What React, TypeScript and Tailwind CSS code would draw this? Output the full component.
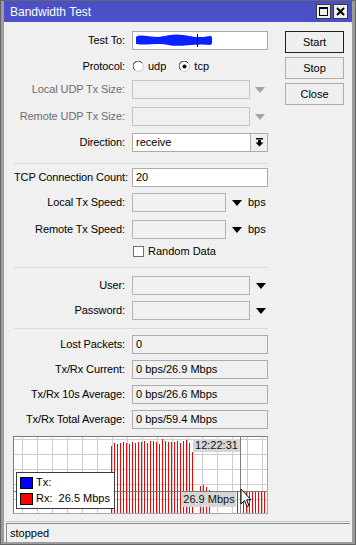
import React from "react";

const font = { fontFamily: '"Liberation Sans", Arial, sans-serif' };

function Arrow({ color = "#000" }: { color?: string }) {
  return (
    <svg width="10" height="6" viewBox="0 0 10 6">
      <polygon points="0,0 10,0 5,6" fill={color} />
    </svg>
  );
}

function Radio({ checked }: { checked?: boolean }) {
  return (
    <svg width="11" height="11" viewBox="0 0 11 11">
      <circle cx="5.5" cy="5.5" r="5" fill="#fff" stroke="#c8c8c8" />
      <path d="M 9 2 A 5 5 0 1 0 2 9" fill="none" stroke="#333" strokeWidth="1" />
      {checked && <circle cx="5.5" cy="5.5" r="2" fill="#000" />}
    </svg>
  );
}

function Label({ text, disabled }: { text: string; disabled?: boolean }) {
  return (
    <div
      className={`w-[111px] shrink-0 text-right whitespace-nowrap tracking-[-0.1px] ${disabled ? "text-[#6d6d6d]" : "text-black"}`}
    >
      {text}
    </div>
  );
}

function Row({ className = "", children }: { className?: string; children: React.ReactNode }) {
  return <div className={`flex items-center h-[19px] ${className}`}>{children}</div>;
}

function Sep({ className = "" }: { className?: string }) {
  return <div className={`h-px bg-[#dadada] w-[254px] ${className}`} />;
}

const barTops = [447, 444, 445, 444, 443, 444, 445, 443, 444, 443, 443, 442, 444, 442, 442, 443, 445, 440, 442, 443, 443, 443, 442, 444, 442, 441, 444, 453];
const smallBars = [
  [200, 487],
  [203, 486],
  [206, 488],
  [209, 491],
];

function Graph() {
  const X0 = 14;
  const Y0 = 438;
  const H = 76;
  const verts: number[] = [];
  for (let x = 8; x < 253; x += 15) verts.push(x);
  const hors = [2, 17, 32, 47, 62];
  const bars: { x: number; top: number }[] = [];
  barTops.forEach((t, i) => bars.push({ x: 111 + i * 3 - X0, top: t - Y0 }));
  smallBars.forEach(([x, t]) => bars.push({ x: x - X0, top: t - Y0 }));
  for (let i = 0; i < 11; i++) bars.push({ x: 237 + i * 3 - X0, top: 492 - Y0 });
  return (
    <div className="relative -ml-px mt-[7px] w-[255px] h-[78px] bg-white border border-[#a8a8a8] border-t-[#7a7a7a] border-l-[#7a7a7a]">
      <svg width="253" height="76" viewBox="0 0 253 76" className="absolute left-0 top-0">
        {verts.map((x) => (
          <line key={"v" + x} x1={x + 0.5} y1="0" x2={x + 0.5} y2={H} stroke="#cdcdcd" strokeWidth="1" />
        ))}
        {hors.map((y) => (
          <line key={"h" + y} x1="0" y1={y + 0.5} x2="253" y2={y + 0.5} stroke="#cdcdcd" strokeWidth="1" />
        ))}
        {bars.map((b, i) => (
          <rect key={i} x={b.x} y={b.top} width="1" height={H - b.top} fill="#ff0000" />
        ))}
        <line x1="0" y1="54.5" x2="253" y2="54.5" stroke="#7c7c7c" strokeWidth="1" />
        <line x1="226.5" y1="0" x2="226.5" y2={H} stroke="#7c7c7c" strokeWidth="1" />
      </svg>
      <div className="absolute left-[179px] top-[2px] w-[47px] h-[13px] bg-[#d6d6d6] text-[11px] leading-[13px] text-center text-[#111]">
        12:22:31
      </div>
      <div className="absolute left-[168px] top-[55px] w-[54px] h-[15px] bg-[#d6d6d6] text-[11px] leading-[15px] text-center text-[#111]">
        26.9 Mbps
      </div>
      <div className="absolute left-[2px] top-[35px] w-[99px] h-[37px] bg-white border border-[#3c3c3c] flex flex-col justify-center gap-[3px] pl-[3px]">
        <div className="flex items-center h-[13px]">
          <div className="w-[13px] h-[12px] bg-[#0000ff] border border-black" />
          <span className="ml-[3px] text-[11px]">Tx:</span>
        </div>
        <div className="flex items-center h-[13px]">
          <div className="w-[13px] h-[12px] bg-[#ff0000] border border-black" />
          <span className="ml-[3px] text-[11px] whitespace-pre">Rx:  26.5 Mbps</span>
        </div>
      </div>
      <svg width="12" height="20" viewBox="0 0 12 20" className="absolute left-[226px] top-[51px]">
        <path d="M1 1 L1 16 L4.5 12.5 L7 18.5 L9 17.6 L6.6 11.8 L11 11.8 Z" fill="#fff" stroke="#000" strokeWidth="1" strokeLinejoin="round" />
      </svg>
    </div>
  );
}

function Btn({ text, primary }: { text: string; primary?: boolean }) {
  return (
    <div
      className={`w-[59px] h-[22px] flex items-center justify-center bg-[#efefef] border ${
        primary ? "border-[#1f1f1f]" : "border-[#adadad]"
      } text-[11px] text-black`}
    >
      {text}
    </div>
  );
}

export default function App() {
  return (
    <div
      style={font}
      className="w-[356px] h-[545px] bg-[#9c9c9c] border border-[#666] flex flex-col pb-[2px] text-[11px] text-black"
    >
      <div className="mx-[3px] h-[21px] bg-[#4b50c8] flex items-center pl-[6px] pr-[4px] shrink-0">
        <span className="text-white text-[12px]">Bandwidth Test</span>
        <div className="ml-auto flex gap-[2px]">
          <div className="w-[15px] h-[15px] bg-[#efefef] border border-[#3a3a3a] flex items-center justify-center">
            <div className="w-[9px] h-[9px] border border-black border-t-2" />
          </div>
          <div className="w-[15px] h-[15px] bg-[#efefef] border border-[#3a3a3a] flex items-center justify-center">
            <svg width="9" height="9" viewBox="0 0 9 9">
              <path d="M1 1 L8 8 M8 1 L1 8" stroke="#000" strokeWidth="2" />
            </svg>
          </div>
        </div>
      </div>
      <div className="mx-[3px] flex-1 bg-[#f0f0f0] flex flex-col">
        <div className="flex pt-[9px] pl-[10px]">
          <div className="w-[254px] flex flex-col">
            <Row>
              <Label text="Test To:" />
              <div className="ml-[7px] w-[136px] h-[19px] bg-white border border-[#acacac] flex items-center pl-[2px]">
                <svg width="78" height="13" viewBox="0 0 78 13">
                  <path
                    d="M2 4 C10 2, 20 7, 30 4 S 50 3, 60 5 S 72 3, 76 4 M2 8 C12 10, 22 6, 34 9 S 56 7, 76 9"
                    stroke="#0a22ff"
                    strokeWidth="4"
                    fill="none"
                  />
                  <rect x="1" y="3" width="76" height="7" fill="#0a22ff" />
                  <rect x="62" y="0" width="1" height="13" fill="#000" />
                </svg>
              </div>
            </Row>
            <Row className="mt-[7px]">
              <Label text="Protocol:" />
              <div className="ml-[8px] flex items-center">
                <Radio />
                <span className="ml-[4px]">udp</span>
                <div className="ml-[13px]">
                  <Radio checked />
                </div>
                <span className="ml-[4px]">tcp</span>
              </div>
            </Row>
            <Row className="mt-[4px]">
              <Label text="Local UDP Tx Size:" disabled />
              <div className="ml-[7px] w-[118px] h-[19px] border border-[#c4c4c4]" />
              <div className="ml-[5px]">
                <Arrow color="#a3a3a3" />
              </div>
            </Row>
            <Row className="mt-[8px]">
              <Label text="Remote UDP Tx Size:" disabled />
              <div className="ml-[7px] w-[118px] h-[19px] border border-[#c4c4c4]" />
              <div className="ml-[5px]">
                <Arrow color="#a3a3a3" />
              </div>
            </Row>
            <Row className="mt-[7px]">
              <Label text="Direction:" />
              <div className="ml-[7px] w-[119px] h-[19px] bg-white border border-[#acacac] flex items-center pl-[3px]">
                receive
              </div>
              <div className="-ml-px w-[18px] h-[19px] border border-[#acacac] bg-[#f0f0f0] flex items-center justify-center">
                <svg width="9" height="9" viewBox="0 0 9 9">
                  <rect x="1" y="0" width="7" height="1.5" fill="#000" />
                  <rect x="3" y="2" width="3" height="3" fill="#000" />
                  <polygon points="0.5,4.5 8.5,4.5 4.5,8.5" fill="#000" />
                </svg>
              </div>
            </Row>
            <Sep className="mt-[11px]" />
            <Row className="mt-[4px]">
              <Label text="TCP Connection Count:" />
              <div className="ml-[7px] w-[136px] h-[19px] bg-white border border-[#acacac] flex items-center pl-[3px]">
                20
              </div>
            </Row>
            <Row className="mt-[6px]">
              <Label text="Local Tx Speed:" />
              <div className="ml-[7px] w-[94px] h-[19px] border border-[#b4b4b4]" />
              <div className="ml-[6px]">
                <Arrow />
              </div>
              <span className="ml-[6px]">bps</span>
            </Row>
            <Row className="mt-[8px]">
              <Label text="Remote Tx Speed:" />
              <div className="ml-[7px] w-[94px] h-[19px] border border-[#b4b4b4]" />
              <div className="ml-[6px]">
                <Arrow />
              </div>
              <span className="ml-[6px]">bps</span>
            </Row>
            <div className="flex items-center h-[15px] mt-[5px]">
              <div className="w-[111px] shrink-0" />
              <div className="ml-[8px] w-[11px] h-[11px] bg-white border border-[#6f6f6f]" />
              <span className="ml-[4px]">Random Data</span>
            </div>
            <Sep className="mt-[8px]" />
            <Row className="mt-[8px]">
              <Label text="User:" />
              <div className="ml-[7px] w-[118px] h-[19px] border border-[#b4b4b4]" />
              <div className="ml-[6px]">
                <Arrow />
              </div>
            </Row>
            <Row className="mt-[6px]">
              <Label text="Password:" />
              <div className="ml-[7px] w-[118px] h-[19px] border border-[#b4b4b4]" />
              <div className="ml-[6px]">
                <Arrow />
              </div>
            </Row>
            <Sep className="mt-[8px]" />
            <Row className="mt-[6px]">
              <Label text="Lost Packets:" />
              <div className="ml-[7px] w-[136px] h-[19px] border border-[#acacac] flex items-center pl-[3px]">0</div>
            </Row>
            <Row className="mt-[6px]">
              <Label text="Tx/Rx Current:" />
              <div className="ml-[7px] w-[136px] h-[19px] border border-[#acacac] flex items-center pl-[3px]">
                0 bps/26.9 Mbps
              </div>
            </Row>
            <Row className="mt-[6px]">
              <Label text="Tx/Rx 10s Average:" />
              <div className="ml-[7px] w-[136px] h-[19px] border border-[#acacac] flex items-center pl-[3px]">
                0 bps/26.6 Mbps
              </div>
            </Row>
            <Row className="mt-[6px]">
              <Label text="Tx/Rx Total Average:" />
              <div className="ml-[7px] w-[136px] h-[19px] border border-[#acacac] flex items-center pl-[3px]">
                0 bps/59.4 Mbps
              </div>
            </Row>
            <Graph />
          </div>
          <div className="ml-[17px] flex flex-col gap-[4px]">
            <Btn text="Start" primary />
            <Btn text="Stop" />
            <Btn text="Close" />
          </div>
        </div>
        <div className="mt-auto h-px mx-[2px] bg-[#c4c4c4]" />
        <div className="mt-[1px] mx-[2px] h-[19px] border-t border-l border-[#8a8a8a] flex items-center pl-[3px]">
          stopped
        </div>
      </div>
    </div>
  );
}
